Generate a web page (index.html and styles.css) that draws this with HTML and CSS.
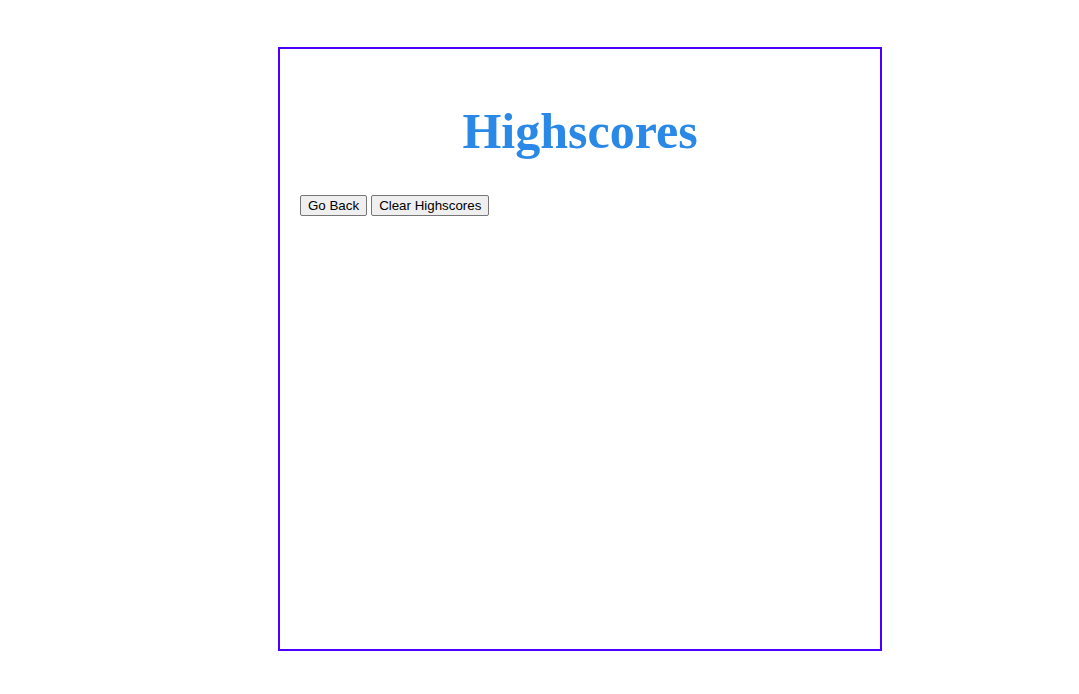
FILE: index.html
```html
<!DOCTYPE html>
<html>
<head>
<meta charset="utf-8">
<title>Highscores</title>
<link rel="stylesheet" href="styles.css">
</head>
<body>
<main class="card">
  <h1 class="title">Highscores</h1>
  <div class="actions">
    <button class="btn">Go Back</button>
    <button class="btn">Clear Highscores</button>
  </div>
</main>
</body>
</html>
```
FILE: styles.css
```css
html, body {
  margin: 0;
  padding: 0;
  background: #ffffff;
}
body {
  padding: 47px 0 0 278px;
}
.card {
  box-sizing: border-box;
  width: 604px;
  height: 604px;
  border: 2px solid #4a00ff;
  padding: 54px 20px 20px 20px;
}
.title {
  margin: 0;
  text-align: center;
  font-family: "Liberation Serif", "Times New Roman", serif;
  font-weight: bold;
  font-size: 50px;
  line-height: 57px;
  color: #2a88e6;
}
.actions {
  display: flex;
  gap: 4px;
  margin-top: 35px;
}
.btn {
  font-family: "Liberation Sans", Arial, sans-serif;
  font-size: 13.33px;
  line-height: 17px;
  padding: 1px 7px;
  border: 1px solid #767676;
  border-radius: 2px;
  background: #efefef;
  color: #000;
}
```
